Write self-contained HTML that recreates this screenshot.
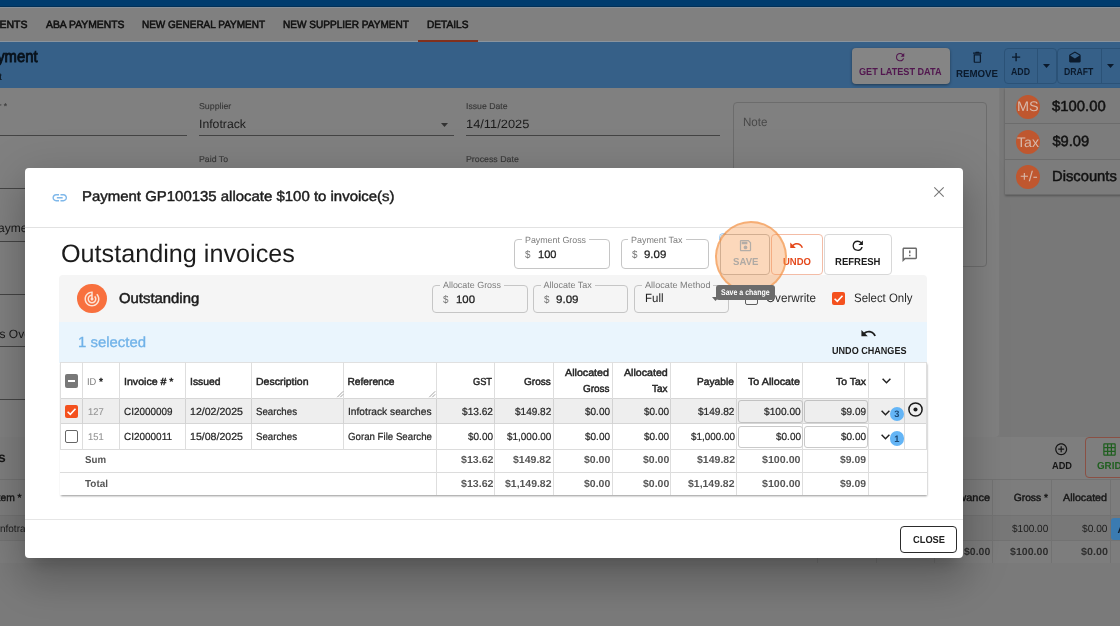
<!DOCTYPE html>
<html>
<head>
<meta charset="utf-8">
<title>Payment allocate</title>
<style>
*{box-sizing:border-box;margin:0;padding:0}
html,body{width:1120px;height:626px;overflow:hidden;background:#7a7a7a;font-family:"Liberation Sans",sans-serif;color:#111}
.a{position:absolute}
.t{position:absolute;white-space:pre;line-height:1;transform-origin:0 50%;text-rendering:geometricPrecision}
#bg,#fg{position:absolute;left:0;top:0;width:1120px;height:626px;overflow:hidden;will-change:transform}
.ul{position:absolute;height:1px;background:#444}
.ob{position:absolute;border:1px solid #c6c6c6;border-radius:4px}
.btn{position:absolute;border:1px solid #d0d0d0;border-radius:4px;background:#fff}
.vl{position:absolute;width:1px;background:#dedede}
.hl{position:absolute;height:1px;background:#dedede}
.cb{position:absolute;width:13.3px;height:13.3px;border-radius:2px}
svg{position:absolute;overflow:visible}
</style>
</head>
<body>
<div id="bg">
<div class="a" style="left:0;top:0;width:1120px;height:7px;background:#003c6e;border-bottom:1px solid #003058"></div><div class="a" style="left:0;top:7px;width:1120px;height:35px;background:#808080;border-top:1px solid #86909a;border-bottom:1px solid #8a949e"></div><span class="t" style="top:20.00px;font-size:10.5px;color:#101010;-webkit-text-stroke:0.55px #101010;left:-9.25px;">MENTS</span><span class="t" style="top:20.00px;font-size:10.5px;color:#101010;transform:scaleX(0.9866);-webkit-text-stroke:0.55px #101010;left:45.75px;">ABA PAYMENTS</span><span class="t" style="top:20.00px;font-size:10.5px;color:#101010;transform:scaleX(0.9511);-webkit-text-stroke:0.55px #101010;left:142.00px;">NEW GENERAL PAYMENT</span><span class="t" style="top:20.00px;font-size:10.5px;color:#101010;transform:scaleX(0.9584);-webkit-text-stroke:0.55px #101010;left:283.00px;">NEW SUPPLIER PAYMENT</span><span class="t" style="top:20.00px;font-size:10.5px;color:#101010;transform:scaleX(0.9655);-webkit-text-stroke:0.55px #101010;left:427.00px;">DETAILS</span><div class="a" style="left:418px;top:40px;width:60px;height:2px;background:#82301c"></div><div class="a" style="left:0;top:42px;width:1120px;height:46px;background:#366088"></div><span class="t" style="top:49.00px;font-size:16.7px;color:#08111a;transform:scaleX(0.8883);-webkit-text-stroke:0.85px #08111a;left:-21.40px;">Payment</span><span class="t" style="top:73.00px;font-size:10px;color:#0a141e;left:-0.78px;">t</span><div class="a" style="left:851.5px;top:47.5px;width:98.5px;height:36.5px;background:#858585;border-radius:4px;box-shadow:0 1px 3px rgba(0,0,0,.4)"></div><span class="t" style="top:68.00px;font-size:10.2px;color:#52174f;font-weight:700;transform:scaleX(0.8943);left:859.20px;">GET LATEST DATA</span><svg style="left:893.6px;top:51.2px" width="12.3" height="12.3" viewBox="0 0 24 24"><path fill="#52174f" d="M17.65 6.35A7.95 7.95 0 0 0 12 4a8 8 0 1 0 7.73 10h-2.08A6 6 0 1 1 12 6c1.66 0 3.14.69 4.22 1.78L13 11h7V4z"/></svg><span class="t" style="top:70.00px;font-size:10.2px;color:#0b1a2c;font-weight:700;transform:scaleX(0.9512);left:955.50px;">REMOVE</span><svg style="left:969.6px;top:49.6px" width="14.7" height="14.7" viewBox="0 0 24 24"><path fill="#0b1a2c" d="M6 19c0 1.1.9 2 2 2h8c1.1 0 2-.9 2-2V7H6zM8 9h8v10H8zm7.5-5l-1-1h-5l-1 1H5v2h14V4z"/></svg><div class="a" style="left:1003.5px;top:48px;width:53px;height:35.5px;border:1px solid #2b5277;border-radius:4px"></div><div class="a" style="left:1037px;top:48px;width:1px;height:35.5px;background:#2b5277"></div><span class="t" style="top:68.00px;font-size:10.2px;color:#0b1a2c;font-weight:700;transform:scaleX(0.8606);left:1011.20px;">ADD</span><svg style="left:1012.4px;top:53px" width="8.2" height="8.2" viewBox="0 0 10 10"><path stroke="#0b1a2c" stroke-width="1.7" fill="none" d="M5 0v10M0 5h10"/></svg><svg style="left:1043px;top:64px" width="7" height="4" viewBox="0 0 7 4"><path fill="#0b1a2c" d="M0 0h7L3.5 4z"/></svg><div class="a" style="left:1057px;top:48px;width:70px;height:35.5px;border:1px solid #2b5277;border-radius:4px"></div><div class="a" style="left:1101px;top:48px;width:1px;height:35.5px;background:#2b5277"></div><span class="t" style="top:68.00px;font-size:10.2px;color:#0b1a2c;font-weight:700;transform:scaleX(0.8514);left:1064.00px;">DRAFT</span><svg style="left:1068.3px;top:51px" width="13.8" height="13.8" viewBox="0 0 24 24"><path fill="#0b1a2c" d="M21.99 8c0-.72-.37-1.35-.94-1.7L12 1 2.95 6.3C2.38 6.65 2 7.28 2 8v10c0 1.1.9 2 2 2h16c1.1 0 2-.9 2-2zM12 13L3.74 7.84 12 3l8.26 4.84z"/></svg><svg style="left:1107.3px;top:64px" width="7" height="4" viewBox="0 0 7 4"><path fill="#0b1a2c" d="M0 0h7L3.5 4z"/></svg><div class="a" style="left:-4px;top:88px;width:1003px;height:349px;background:#808080;border-radius:0 0 4px 4px"></div><span class="t" style="top:102.00px;font-size:8.5px;color:#383838;-webkit-text-stroke:0.15px #383838;left:-1.50px;">r *</span><div class="ul" style="left:0;top:134.5px;width:186.5px"></div><span class="t" style="top:102.00px;font-size:8.5px;color:#383838;transform:scaleX(1.0357);-webkit-text-stroke:0.15px #383838;left:199.00px;">Supplier</span><span class="t" style="top:118.00px;font-size:12px;color:#1a1a1a;transform:scaleX(1.0210);left:199.00px;">Infotrack</span><div class="ul" style="left:199px;top:134.5px;width:254.8px"></div><svg style="left:441px;top:123px" width="7" height="4" viewBox="0 0 7 4"><path fill="#333" d="M0 0h7L3.5 4z"/></svg><span class="t" style="top:102.00px;font-size:8.5px;color:#383838;transform:scaleX(1.0211);-webkit-text-stroke:0.15px #383838;left:465.50px;">Issue Date</span><span class="t" style="top:118.00px;font-size:12px;color:#1a1a1a;transform:scaleX(1.0698);left:465.50px;">14/11/2025</span><div class="ul" style="left:465.5px;top:134.5px;width:254.5px"></div><span class="t" style="top:155.00px;font-size:8.5px;color:#383838;transform:scaleX(1.0283);-webkit-text-stroke:0.15px #383838;left:199.00px;">Paid To</span><span class="t" style="top:155.00px;font-size:8.5px;color:#383838;transform:scaleX(1.0347);-webkit-text-stroke:0.15px #383838;left:465.50px;">Process Date</span><div class="a" style="left:733px;top:101.5px;width:254px;height:165px;border:1px solid #6c6c6c;border-radius:4px"></div><span class="t" style="top:116.00px;font-size:12px;color:#484848;transform:scaleX(0.9661);left:743.00px;">Note</span><div class="ul" style="left:0;top:188px;width:30px"></div><span class="t" style="top:222.00px;font-size:12px;color:#181818;left:0.00px;margin-left:-10px;">Payme</span><div class="ul" style="left:0;top:240.5px;width:30px"></div><div class="ul" style="left:0;top:293.5px;width:30px"></div><span class="t" style="top:328.00px;font-size:12px;color:#181818;left:-0.50px;">s Over</span><div class="ul" style="left:0;top:346px;width:30px"></div><div class="ul" style="left:0;top:399px;width:30px"></div><div class="a" style="left:999.5px;top:88px;width:121px;height:349px;background:#787878"></div><div class="a" style="left:1004.5px;top:88px;width:120px;height:107px;background:#7c7c7c;box-shadow:0 1px 2px rgba(0,0,0,.3)"></div><div class="a" style="left:1004.5px;top:123px;width:120px;height:1px;background:#6c6c6c"></div><div class="a" style="left:1004.5px;top:159px;width:120px;height:1px;background:#6c6c6c"></div><div class="a" style="left:1004.5px;top:194px;width:120px;height:1px;background:#6c6c6c"></div><div class="a" style="left:1016.0999999999999px;top:94.5px;width:24px;height:24px;border-radius:50%;background:#bf572f;overflow:hidden"></div><span class="t" style="top:99.00px;font-size:14px;color:#d8b9ab;transform:scaleX(1.0333);left:1017.40px;">MS</span><div class="a" style="left:1016.0999999999999px;top:129.6px;width:24px;height:24px;border-radius:50%;background:#bf572f;overflow:hidden"></div><span class="t" style="top:135.00px;font-size:14px;color:#d8b9ab;transform:scaleX(1.0093);left:1017.40px;">Tax</span><div class="a" style="left:1016.0999999999999px;top:164.5px;width:24px;height:24px;border-radius:50%;background:#bf572f;overflow:hidden"></div><span class="t" style="top:169.00px;font-size:14px;color:#d8b9ab;transform:scaleX(1.0637);left:1019.80px;">+/-</span><span class="t" style="top:100.00px;font-size:14.7px;color:#121212;transform:scaleX(1.0133);-webkit-text-stroke:0.5px #121212;left:1052.40px;">$100.00</span><span class="t" style="top:135.00px;font-size:14.7px;color:#121212;-webkit-text-stroke:0.5px #121212;left:1052.40px;">$9.09</span><span class="t" style="top:170.00px;font-size:14.7px;color:#121212;transform:scaleX(1.0047);-webkit-text-stroke:0.5px #121212;left:1052.40px;">Discounts</span><div class="a" style="left:-4px;top:437px;width:1130px;height:126px;background:#7e7e7e"></div><span class="t" style="top:450.00px;font-size:14px;color:#161616;font-weight:700;left:-2.00px;">s</span><svg style="left:1054.1px;top:442.3px" width="14.4" height="14.4" viewBox="0 0 24 24"><path fill="#161616" d="M13 7h-2v4H7v2h4v4h2v-4h4v-2h-4zm-1-5C6.48 2 2 6.48 2 12s4.480 10 10 10 10-4.480 10-10S17.520 2 12 2zm0 18c-4.410 0-8-3.590-8-8s3.590-8 8-8 8 3.590 8 8-3.590 8-8 8z"/></svg><span class="t" style="top:462.00px;font-size:10.2px;color:#161616;font-weight:700;transform:scaleX(0.9059);left:1051.70px;">ADD</span><div class="a" style="left:1085px;top:437.3px;width:50px;height:41px;border:1px solid #8a5044;border-radius:4px"></div><svg style="left:1101.75px;top:441.75px" width="15" height="15" viewBox="0 0 24 24"><path fill="#1f5f1f" d="M20 2H4c-1.100 0-2 .900-2 2v16c0 1.100.900 2 2 2h16c1.100 0 2-.900 2-2V4c0-1.100-.900-2-2-2zM8 20H4v-4h4zm0-6H4v-4h4zm0-6H4V4h4zm6 12h-4v-4h4zm0-6h-4v-4h4zm0-6h-4V4h4zm6 12h-4v-4h4zm0-6h-4v-4h4zm0-6h-4V4h4z"/></svg><span class="t" style="top:462.00px;font-size:10.2px;color:#1f5f1f;font-weight:700;transform:scaleX(0.9620);left:1097.30px;">GRID</span><div class="a" style="left:0;top:479px;width:1120px;height:36.5px;background:#7d7d7d;border-top:1px solid #727272;border-bottom:1px solid #727272"></div><div class="a" style="left:0;top:515.5px;width:1120px;height:25px;background:#787878;border-bottom:1px solid #727272"></div><div class="a" style="left:0;top:540.5px;width:1120px;height:22.5px;background:#7d7d7d"></div><div class="a" style="left:817px;top:479px;width:1px;height:84px;background:#727272"></div><div class="a" style="left:875.5px;top:479px;width:1px;height:84px;background:#727272"></div><div class="a" style="left:934px;top:479px;width:1px;height:84px;background:#727272"></div><div class="a" style="left:992px;top:479px;width:1px;height:84px;background:#727272"></div><div class="a" style="left:1050.5px;top:479px;width:1px;height:84px;background:#727272"></div><div class="a" style="left:1109.5px;top:479px;width:1px;height:84px;background:#727272"></div><span class="t" style="top:494.00px;font-size:10.3px;color:#161616;-webkit-text-stroke:0.4px #161616;left:-2.45px;">tem *</span><span class="t" style="top:494.00px;font-size:10.3px;color:#161616;transform:scaleX(1.0652);-webkit-text-stroke:0.4px #161616;left:939.50px;">Allowance</span><span class="t" style="top:494.00px;font-size:10.3px;color:#161616;-webkit-text-stroke:0.4px #161616;left:1013.70px;">Gross *</span><span class="t" style="top:494.00px;font-size:10.3px;color:#161616;transform:scaleX(1.0387);-webkit-text-stroke:0.4px #161616;left:1062.50px;">Allocated</span><span class="t" style="top:525.00px;font-size:10.3px;color:#1c1c1c;transform:scaleX(0.9689);left:0.30px;">nfotrack</span><span class="t" style="top:525.00px;font-size:10.3px;color:#1c1c1c;transform:scaleX(0.9749);left:1012.45px;">$100.00</span><span class="t" style="top:525.00px;font-size:10.3px;color:#1c1c1c;transform:scaleX(0.9891);left:1082.00px;">$0.00</span><div class="a" style="left:1110.5px;top:517.5px;width:20px;height:22.5px;background:#3b7bb1;border-radius:3px"></div><span class="t" style="top:526.00px;font-size:10.3px;color:#0c1c2c;font-weight:700;left:1117.50px;">A</span><span class="t" style="top:548.00px;font-size:10.3px;color:#2e2e2e;font-weight:700;transform:scaleX(1.0201);left:963.70px;">$0.00</span><span class="t" style="top:548.00px;font-size:10.3px;color:#2e2e2e;font-weight:700;transform:scaleX(1.0286);left:1010.45px;">$100.00</span><span class="t" style="top:548.00px;font-size:10.3px;color:#2e2e2e;font-weight:700;transform:scaleX(1.0473);left:1080.50px;">$0.00</span></div>
<div id="fg"><div class="a" style="left:25px;top:168px;width:938px;height:390px;background:#fff;border-radius:4px;box-shadow:0 11px 15px -7px rgba(0,0,0,.2),0 24px 38px 3px rgba(0,0,0,.14),0 9px 46px 8px rgba(0,0,0,.12)"></div><div class="a" style="left:25px;top:227px;width:938px;height:1px;background:#e2e2e2"></div><div class="a" style="left:25px;top:519px;width:938px;height:1px;background:#e6e6e6"></div><svg style="left:51.35px;top:188.65px" width="17.5" height="17.5" viewBox="0 0 24 24"><path fill="#7fb8ea" d="M3.900 12c0-1.710 1.390-3.100 3.100-3.100h4V7H7c-2.760 0-5 2.240-5 5s2.240 5 5 5h4v-1.900H7c-1.710 0-3.100-1.390-3.100-3.100zM8 13h8v-2H8zm9-6h-4v1.900h4c1.710 0 3.100 1.390 3.100 3.100s-1.390 3.100-3.100 3.100h-4V17h4c2.760 0 5-2.240 5-5s-2.240-5-5-5z"/></svg><span class="t" style="top:190.00px;font-size:14.2px;color:#1c1c1c;transform:scaleX(1.0538);-webkit-text-stroke:0.45px #1c1c1c;left:81.50px;">Payment GP100135 allocate $100 to invoice(s)</span><svg style="left:934px;top:187px" width="10" height="10" viewBox="0 0 10 10"><path stroke="#777" stroke-width="1.1" fill="none" d="M0.3 0.3l9.400 9.400M9.700 0.300l-9.400 9.400"/></svg><span class="t" style="top:242.00px;font-size:25.2px;color:#1c1c1c;left:61.00px;">Outstanding invoices</span><div class="ob" style="left:514px;top:239px;width:96px;height:30px"></div><div class="a" style="left:521.5px;top:238px;width:67.0px;height:3px;background:#fff"></div><span class="t" style="top:236.00px;font-size:9px;color:#7c7c7c;transform:scaleX(0.9834);left:524.50px;">Payment Gross</span><span class="t" style="top:250.00px;font-size:10.9px;color:#757575;transform:scaleX(0.9072);left:524.50px;">$</span><span class="t" style="top:250.00px;font-size:10.9px;color:#222;transform:scaleX(1.0181);-webkit-text-stroke:0.25px #222;left:537.50px;">100</span><div class="ob" style="left:621px;top:239px;width:88px;height:30px"></div><div class="a" style="left:628px;top:238px;width:57.5px;height:3px;background:#fff"></div><span class="t" style="top:236.00px;font-size:9px;color:#7c7c7c;transform:scaleX(0.9928);left:631.00px;">Payment Tax</span><span class="t" style="top:250.00px;font-size:10.9px;color:#757575;transform:scaleX(0.9072);left:631.50px;">$</span><span class="t" style="top:250.00px;font-size:10.9px;color:#222;transform:scaleX(1.0517);-webkit-text-stroke:0.25px #222;left:643.80px;">9.09</span><div class="btn" style="left:720px;top:234px;width:50px;height:40.5px;border:1.500px solid #bdbdbd"></div><div class="btn" style="left:770.5px;top:234px;width:52px;height:40.5px;border-color:#f3bca6"></div><div class="btn" style="left:823.5px;top:234px;width:68px;height:40.5px;border-color:#d8d8d8"></div><svg style="left:788.9px;top:237.7px" width="15" height="15" viewBox="0 0 24 24"><path fill="#e4491c" d="M12.500 8c-2.650 0-5.050.990-6.900 2.600L2 7v9h9l-3.620-3.620c1.390-1.160 3.160-1.880 5.120-1.880 3.540 0 6.550 2.310 7.600 5.500l2.370-.780C21.080 11.030 17.150 8 12.500 8z"/></svg><span class="t" style="top:258.00px;font-size:10.2px;color:#e4491c;font-weight:700;transform:scaleX(0.9333);left:783.00px;">UNDO</span><svg style="left:850px;top:237.5px" width="15.5" height="15.5" viewBox="0 0 24 24"><path fill="#1c1c1c" d="M17.650 6.350A7.950 7.950 0 0 0 12 4a8 8 0 1 0 7.730 10h-2.080A6 6 0 1 1 12 6c1.660 0 3.140.690 4.220 1.780L13 11h7V4z"/></svg><span class="t" style="top:258.00px;font-size:10.2px;color:#1c1c1c;font-weight:700;transform:scaleX(0.9345);left:835.00px;">REFRESH</span><svg style="left:901px;top:246.3px" width="17.500" height="17.500" viewBox="0 0 24 24"><path fill="#6a6a6a" d="M20 2H4c-1.100 0-2 .900-2 2v18l4-4h14c1.100 0 2-.900 2-2V4c0-1.100-.900-2-2-2zm0 14H5.170L4 17.170V4h16zm-9-4h2v2h-2zm0-6h2v4h-2z"/></svg><div class="a" style="left:59px;top:275px;width:868px;height:48px;background:#f5f5f5;border-radius:4px 4px 0 0"></div><div class="a" style="left:77px;top:283.700px;width:29.800px;height:29.800px;border-radius:50%;background:#f8703e"></div><svg style="left:83px;top:289.5px" width="18" height="18" viewBox="0 0 24 24"><path fill="#fde3d6" d="M19.070 4.930l-1.410 1.410C19.100 7.790 20 9.790 20 12c0 4.420-3.580 8-8 8s-8-3.580-8-8c0-4.080 3.050-7.440 7-7.930v2.020C8.160 6.570 6 9.030 6 12c0 3.310 2.690 6 6 6s6-2.690 6-6c0-1.660-.670-3.160-1.760-4.240l-1.410 1.410C15.550 9.900 16 10.900 16 12c0 2.210-1.790 4-4 4s-4-1.790-4-4c0-1.860 1.280-3.410 3-3.860v2.140c-.600.350-1 .980-1 1.720 0 1.100.900 2 2 2s2-.900 2-2c0-.740-.400-1.380-1-1.720V2h-1C6.480 2 2 6.480 2 12s4.480 10 10 10 10-4.480 10-10c0-2.760-1.120-5.260-2.930-7.070z"/></svg><span class="t" style="top:292.00px;font-size:14.2px;color:#1c1c1c;transform:scaleX(1.0482);-webkit-text-stroke:0.5px #1c1c1c;left:119.20px;">Outstanding</span><div class="ob" style="left:432px;top:284.5px;width:95.5px;height:28.5px"></div><div class="a" style="left:439.5px;top:283.5px;width:64.0px;height:3px;background:#f5f5f5"></div><span class="t" style="top:281.00px;font-size:9px;color:#7c7c7c;transform:scaleX(0.9909);left:442.50px;">Allocate Gross</span><span class="t" style="top:295.00px;font-size:10.9px;color:#757575;transform:scaleX(0.9072);left:442.50px;">$</span><span class="t" style="top:295.00px;font-size:10.9px;color:#222;transform:scaleX(1.0456);-webkit-text-stroke:0.25px #222;left:455.50px;">100</span><div class="ob" style="left:533px;top:284.5px;width:95px;height:28.5px"></div><div class="a" style="left:540.5px;top:283.5px;width:54.5px;height:3px;background:#f5f5f5"></div><span class="t" style="top:281.00px;font-size:9px;color:#7c7c7c;left:543.50px;">Allocate Tax</span><span class="t" style="top:295.00px;font-size:10.9px;color:#757575;transform:scaleX(0.9072);left:543.50px;">$</span><span class="t" style="top:295.00px;font-size:10.9px;color:#222;transform:scaleX(1.0612);-webkit-text-stroke:0.25px #222;left:556.30px;">9.09</span><div class="ob" style="left:634px;top:284.5px;width:94.5px;height:28.5px"></div><div class="a" style="left:641.5px;top:283.5px;width:71.5px;height:3px;background:#f5f5f5"></div><span class="t" style="top:281.00px;font-size:9px;color:#7c7c7c;transform:scaleX(1.0148);left:644.50px;">Allocate Method</span><span class="t" style="top:292.00px;font-size:12px;color:#222;transform:scaleX(0.9564);left:644.50px;">Full</span><svg style="left:712px;top:297px" width="7" height="4" viewBox="0 0 7 4"><path fill="#666" d="M0 0h7L3.500 4z"/></svg><div class="cb" style="left:744.5px;top:291.5px;border:1.5px solid #5f5f5f"></div><span class="t" style="top:292.00px;font-size:12.3px;color:#2a2a2a;transform:scaleX(0.9501);left:766.30px;">Overwrite</span><div class="cb" style="left:831.5px;top:292px;background:#f4511e"></div><svg style="left:831.5px;top:292px" width="13" height="13" viewBox="0 0 13 13"><path fill="none" stroke="#fff" stroke-width="1.600" d="M2.600 6.700l2.700 2.700 5.200-5.600"/></svg><span class="t" style="top:292.00px;font-size:12.3px;color:#2a2a2a;transform:scaleX(0.9302);left:853.70px;">Select Only</span><div class="a" style="left:59px;top:322px;width:868px;height:40.5px;background:#eaf5fd"></div><span class="t" style="top:336.00px;font-size:14.5px;color:#70b2e8;transform:scaleX(1.0286);-webkit-text-stroke:0.32px #70b2e8;left:78.00px;">1 selected</span><svg style="left:859.6px;top:324.9px" width="17" height="17" viewBox="0 0 24 24"><path fill="#1c1c1c" d="M12.500 8c-2.650 0-5.050.990-6.900 2.600L2 7v9h9l-3.620-3.620c1.390-1.160 3.160-1.880 5.120-1.880 3.540 0 6.550 2.310 7.600 5.500l2.370-.780C21.080 11.030 17.150 8 12.500 8z"/></svg><span class="t" style="top:347.00px;font-size:10.2px;color:#1c1c1c;font-weight:700;transform:scaleX(0.8892);left:831.50px;">UNDO CHANGES</span><div class="a" style="left:60px;top:362px;width:867px;height:133px;background:#fff;box-shadow:0 1.5px 2px -0.5px rgba(0,0,0,.42)"></div><div class="a" style="left:60px;top:399px;width:867px;height:24.500px;background:#eeeeee"></div><div class="hl" style="left:60px;top:362px;width:867px;background:#e0e0e0"></div><div class="hl" style="left:60px;top:398px;width:867px;background:#d6d6d6"></div><div class="hl" style="left:60px;top:423px;width:867px;background:#d6d6d6"></div><div class="hl" style="left:60px;top:449px;width:867px;background:#dcdcdc"></div><div class="hl" style="left:60px;top:471.5px;width:867px;background:#dcdcdc"></div><div class="vl" style="left:60px;top:362px;height:87.5px"></div><div class="vl" style="left:926px;top:362px;height:87.5px"></div><div class="vl" style="left:82px;top:362px;height:87.5px"></div><div class="vl" style="left:119px;top:362px;height:87.5px"></div><div class="vl" style="left:185px;top:362px;height:87.5px"></div><div class="vl" style="left:251px;top:362px;height:87.5px"></div><div class="vl" style="left:343px;top:362px;height:87.5px"></div><div class="vl" style="left:436px;top:362px;height:133px"></div><div class="vl" style="left:494px;top:362px;height:133px"></div><div class="vl" style="left:553px;top:362px;height:133px"></div><div class="vl" style="left:612px;top:362px;height:133px"></div><div class="vl" style="left:670px;top:362px;height:133px"></div><div class="vl" style="left:736px;top:362px;height:133px"></div><div class="vl" style="left:802px;top:362px;height:133px"></div><div class="vl" style="left:868px;top:362px;height:133px"></div><div class="vl" style="left:904px;top:362px;height:87.5px"></div><div class="vl" style="left:82px;top:398.5px;height:25.500px;background:#d2d2d2"></div><div class="vl" style="left:119px;top:398.5px;height:25.500px;background:#d2d2d2"></div><div class="vl" style="left:185px;top:398.5px;height:25.500px;background:#d2d2d2"></div><div class="vl" style="left:251px;top:398.5px;height:25.500px;background:#d2d2d2"></div><div class="vl" style="left:343px;top:398.5px;height:25.500px;background:#d2d2d2"></div><div class="vl" style="left:436px;top:398.5px;height:25.500px;background:#d2d2d2"></div><div class="vl" style="left:494px;top:398.5px;height:25.500px;background:#d2d2d2"></div><div class="vl" style="left:553px;top:398.5px;height:25.500px;background:#d2d2d2"></div><div class="vl" style="left:612px;top:398.5px;height:25.500px;background:#d2d2d2"></div><div class="vl" style="left:670px;top:398.5px;height:25.500px;background:#d2d2d2"></div><div class="vl" style="left:736px;top:398.5px;height:25.500px;background:#d2d2d2"></div><div class="vl" style="left:904px;top:398.5px;height:25.500px;background:#d2d2d2"></div><div class="cb" style="left:65px;top:374.3px;background:#787878"></div><div class="a" style="left:68px;top:380px;width:7px;height:1.600px;background:#fff"></div><span class="t" style="top:378.00px;font-size:10px;color:#7a7a7a;transform:scaleX(0.9300);left:87.00px;">ID</span><span class="t" style="top:378.00px;font-size:10.2px;color:#242424;-webkit-text-stroke:0.45px #242424;left:99.00px;">*</span><span class="t" style="top:378.00px;font-size:10.2px;color:#242424;transform:scaleX(1.0404);-webkit-text-stroke:0.45px #242424;left:123.50px;">Invoice # *</span><span class="t" style="top:378.00px;font-size:10.2px;color:#242424;transform:scaleX(1.0161);-webkit-text-stroke:0.45px #242424;left:189.50px;">Issued</span><span class="t" style="top:378.00px;font-size:10.2px;color:#242424;transform:scaleX(1.0300);-webkit-text-stroke:0.45px #242424;left:255.50px;">Description</span><span class="t" style="top:378.00px;font-size:10.2px;color:#242424;-webkit-text-stroke:0.45px #242424;left:347.50px;">Reference</span><svg style="left:337px;top:391px" width="6.500" height="6.500" viewBox="0 0 6.500 6.500"><path stroke="#8a8a8a" stroke-width="0.800" fill="none" d="M0.300 6.200L6.200 0.300M3.300 6.200L6.200 3.300"/></svg><svg style="left:428.8px;top:391px" width="6.500" height="6.500" viewBox="0 0 6.500 6.500"><path stroke="#8a8a8a" stroke-width="0.800" fill="none" d="M0.300 6.200L6.200 0.300M3.300 6.200L6.200 3.300"/></svg><span class="t" style="top:378.00px;font-size:10.2px;color:#242424;transform:scaleX(0.9068);-webkit-text-stroke:0.45px #242424;left:472.50px;">GST</span><span class="t" style="top:378.00px;font-size:10.2px;color:#242424;transform:scaleX(0.9845);-webkit-text-stroke:0.45px #242424;left:523.75px;">Gross</span><span class="t" style="top:369.00px;font-size:10.2px;color:#242424;transform:scaleX(1.0496);-webkit-text-stroke:0.45px #242424;left:565.00px;">Allocated</span><span class="t" style="top:385.00px;font-size:10.2px;color:#242424;transform:scaleX(0.9753);-webkit-text-stroke:0.45px #242424;left:582.50px;">Gross</span><span class="t" style="top:369.00px;font-size:10.2px;color:#242424;transform:scaleX(1.0436);-webkit-text-stroke:0.45px #242424;left:623.75px;">Allocated</span><span class="t" style="top:385.00px;font-size:10.2px;color:#242424;transform:scaleX(0.9773);-webkit-text-stroke:0.45px #242424;left:652.00px;">Tax</span><span class="t" style="top:378.00px;font-size:10.2px;color:#242424;-webkit-text-stroke:0.45px #242424;left:697.00px;">Payable</span><span class="t" style="top:378.00px;font-size:10.2px;color:#242424;transform:scaleX(1.0552);-webkit-text-stroke:0.45px #242424;left:747.50px;">To Allocate</span><span class="t" style="top:378.00px;font-size:10.2px;color:#242424;transform:scaleX(1.0251);-webkit-text-stroke:0.45px #242424;left:835.50px;">To Tax</span><svg style="left:881.8px;top:378px" width="9" height="6" viewBox="0 0 9 6"><path stroke="#222" stroke-width="1.500" fill="none" d="M0.600 0.800L4.500 4.700L8.400 0.800"/></svg><div class="cb" style="left:65px;top:405px;background:#f4511e"></div><svg style="left:65px;top:405px" width="13" height="13" viewBox="0 0 13 13"><path fill="none" stroke="#fff" stroke-width="1.600" d="M2.600 6.700l2.700 2.700 5.200-5.600"/></svg><span class="t" style="top:408.00px;font-size:9.8px;color:#969696;transform:scaleX(0.9536);-webkit-text-stroke:0.15px #969696;left:87.70px;">127</span><span class="t" style="top:408.00px;font-size:10.3px;color:#262626;transform:scaleX(0.9625);-webkit-text-stroke:0.22px #262626;left:124.00px;">CI2000009</span><span class="t" style="top:408.00px;font-size:10.3px;color:#262626;transform:scaleX(1.0282);-webkit-text-stroke:0.22px #262626;left:190.00px;">12/02/2025</span><span class="t" style="top:408.00px;font-size:10.3px;color:#262626;transform:scaleX(0.9422);-webkit-text-stroke:0.22px #262626;left:256.00px;">Searches</span><span class="t" style="top:408.00px;font-size:10.3px;color:#262626;transform:scaleX(0.9924);-webkit-text-stroke:0.22px #262626;left:348.00px;">Infotrack searches</span><span class="t" style="top:408.00px;font-size:10.3px;color:#262626;transform:scaleX(0.9841);-webkit-text-stroke:0.22px #262626;left:462.00px;">$13.62</span><span class="t" style="top:408.00px;font-size:10.3px;color:#262626;transform:scaleX(0.9736);-webkit-text-stroke:0.22px #262626;left:515.00px;">$149.82</span><span class="t" style="top:408.00px;font-size:10.3px;color:#262626;transform:scaleX(0.9697);-webkit-text-stroke:0.22px #262626;left:585.00px;">$0.00</span><span class="t" style="top:408.00px;font-size:10.3px;color:#262626;transform:scaleX(0.9697);-webkit-text-stroke:0.22px #262626;left:643.75px;">$0.00</span><span class="t" style="top:408.00px;font-size:10.3px;color:#262626;transform:scaleX(0.9803);-webkit-text-stroke:0.22px #262626;left:698.00px;">$149.82</span><div class="a" style="left:738px;top:400px;width:64.500px;height:22.500px;border:1px solid #c2c2c2;border-radius:3px;background:#eeeeee"></div><div class="a" style="left:803.5px;top:400px;width:64.500px;height:22.500px;border:1px solid #c2c2c2;border-radius:3px;background:#eeeeee"></div><span class="t" style="top:408.00px;font-size:10.3px;color:#262626;transform:scaleX(0.9870);-webkit-text-stroke:0.22px #262626;left:763.75px;">$100.00</span><span class="t" style="top:408.00px;font-size:10.3px;color:#262626;transform:scaleX(0.9697);-webkit-text-stroke:0.22px #262626;left:841.25px;">$9.09</span><svg style="left:881.3px;top:409.5px" width="9" height="6" viewBox="0 0 9 6"><path stroke="#222" stroke-width="1.500" fill="none" d="M0.600 0.800L4.500 4.700L8.400 0.800"/></svg><div class="a" style="left:889.7px;top:406.5px;width:14.400px;height:14.400px;border-radius:50%;background:#64b5f6"></div><span class="t" style="top:410.00px;font-size:9.3px;color:#1b4a78;font-weight:700;left:894.20px;">3</span><svg style="left:907.9px;top:401.5px" width="15" height="15" viewBox="0 0 15 15"><circle cx="7.500" cy="7.500" r="6.600" fill="none" stroke="#1c1c1c" stroke-width="1.500"/><circle cx="7.500" cy="7.500" r="2.050" fill="#1c1c1c"/></svg><div class="cb" style="left:65px;top:430px;border:1.500px solid #666;background:#fff"></div><span class="t" style="top:433.00px;font-size:9.8px;color:#969696;transform:scaleX(0.9536);-webkit-text-stroke:0.15px #969696;left:87.70px;">151</span><span class="t" style="top:433.00px;font-size:10.3px;color:#262626;transform:scaleX(0.9673);-webkit-text-stroke:0.22px #262626;left:124.00px;">CI2000011</span><span class="t" style="top:433.00px;font-size:10.3px;color:#262626;transform:scaleX(1.0282);-webkit-text-stroke:0.22px #262626;left:190.00px;">15/08/2025</span><span class="t" style="top:433.00px;font-size:10.3px;color:#262626;transform:scaleX(0.9422);-webkit-text-stroke:0.22px #262626;left:256.00px;">Searches</span><span class="t" style="top:433.00px;font-size:10.3px;color:#262626;transform:scaleX(0.9407);-webkit-text-stroke:0.22px #262626;left:348.00px;">Goran File Searche</span><span class="t" style="top:433.00px;font-size:10.3px;color:#262626;transform:scaleX(0.9697);-webkit-text-stroke:0.22px #262626;left:468.00px;">$0.00</span><span class="t" style="top:433.00px;font-size:10.3px;color:#262626;transform:scaleX(0.9659);-webkit-text-stroke:0.22px #262626;left:507.00px;">$1,000.00</span><span class="t" style="top:433.00px;font-size:10.3px;color:#262626;transform:scaleX(0.9697);-webkit-text-stroke:0.22px #262626;left:585.00px;">$0.00</span><span class="t" style="top:433.00px;font-size:10.3px;color:#262626;transform:scaleX(0.9697);-webkit-text-stroke:0.22px #262626;left:643.75px;">$0.00</span><span class="t" style="top:433.00px;font-size:10.3px;color:#262626;transform:scaleX(0.9604);-webkit-text-stroke:0.22px #262626;left:690.50px;">$1,000.00</span><div class="a" style="left:738px;top:425.500px;width:64.500px;height:22.500px;border:1px solid #cacaca;border-radius:3px;background:#fff"></div><div class="a" style="left:803.5px;top:425.500px;width:64.500px;height:22.500px;border:1px solid #cacaca;border-radius:3px;background:#fff"></div><span class="t" style="top:433.00px;font-size:10.3px;color:#262626;transform:scaleX(0.9697);-webkit-text-stroke:0.22px #262626;left:775.50px;">$0.00</span><span class="t" style="top:433.00px;font-size:10.3px;color:#262626;transform:scaleX(0.9697);-webkit-text-stroke:0.22px #262626;left:841.25px;">$0.00</span><svg style="left:881.3px;top:433.8px" width="9" height="6" viewBox="0 0 9 6"><path stroke="#222" stroke-width="1.500" fill="none" d="M0.600 0.800L4.500 4.700L8.400 0.800"/></svg><div class="a" style="left:889.7px;top:431.200px;width:14.400px;height:14.400px;border-radius:50%;background:#64b5f6"></div><span class="t" style="top:435.00px;font-size:9.3px;color:#1b4a78;font-weight:700;left:894.30px;">1</span><span class="t" style="top:456.00px;font-size:10.2px;color:#555;font-weight:700;transform:scaleX(0.9512);left:85.00px;">Sum</span><span class="t" style="top:480.00px;font-size:10.2px;color:#555;font-weight:700;transform:scaleX(0.9755);left:85.00px;">Total</span><span class="t" style="top:456.00px;font-size:10.2px;color:#555;font-weight:700;transform:scaleX(1.0426);left:460.50px;">$13.62</span><span class="t" style="top:456.00px;font-size:10.2px;color:#555;font-weight:700;transform:scaleX(1.0318);left:513.00px;">$149.82</span><span class="t" style="top:456.00px;font-size:10.2px;color:#555;font-weight:700;transform:scaleX(1.0294);left:583.75px;">$0.00</span><span class="t" style="top:456.00px;font-size:10.2px;color:#555;font-weight:700;transform:scaleX(1.0294);left:642.50px;">$0.00</span><span class="t" style="top:456.00px;font-size:10.2px;color:#555;font-weight:700;transform:scaleX(1.0318);left:696.50px;">$149.82</span><span class="t" style="top:456.00px;font-size:10.2px;color:#555;font-weight:700;transform:scaleX(1.0454);left:762.00px;">$100.00</span><span class="t" style="top:456.00px;font-size:10.2px;color:#555;font-weight:700;transform:scaleX(1.0196);left:840.00px;">$9.09</span><span class="t" style="top:480.00px;font-size:10.2px;color:#555;font-weight:700;transform:scaleX(1.0426);left:460.50px;">$13.62</span><span class="t" style="top:480.00px;font-size:10.2px;color:#555;font-weight:700;transform:scaleX(1.0259);left:504.50px;">$1,149.82</span><span class="t" style="top:480.00px;font-size:10.2px;color:#555;font-weight:700;transform:scaleX(1.0294);left:583.75px;">$0.00</span><span class="t" style="top:480.00px;font-size:10.2px;color:#555;font-weight:700;transform:scaleX(1.0294);left:642.50px;">$0.00</span><span class="t" style="top:480.00px;font-size:10.2px;color:#555;font-weight:700;transform:scaleX(1.0259);left:688.00px;">$1,149.82</span><span class="t" style="top:480.00px;font-size:10.2px;color:#555;font-weight:700;transform:scaleX(1.0454);left:762.00px;">$100.00</span><span class="t" style="top:480.00px;font-size:10.2px;color:#555;font-weight:700;transform:scaleX(1.0196);left:840.00px;">$9.09</span><div class="a" style="left:900px;top:526px;width:56.500px;height:26.500px;border:1px solid #2c2c2c;border-radius:4px;background:#fff"></div><span class="t" style="top:536.00px;font-size:10.2px;color:#222;font-weight:700;transform:scaleX(0.9114);left:912.50px;">CLOSE</span><div class="a" style="left:719.3px;top:233.300px;width:7px;height:7px;border-top:1.500px solid #a6cff4;border-left:1.500px solid #a6cff4;border-top-left-radius:4.500px"></div><div class="a" style="left:715px;top:221px;width:72px;height:72px;border-radius:50%;background:rgba(247,150,70,.37);border:2.800px solid rgba(240,140,60,.55)"></div><svg style="left:738px;top:237.5px" width="15" height="15" viewBox="0 0 24 24"><path fill="#b3ada7" d="M17 3H5c-1.110 0-2 .900-2 2v14c0 1.100.890 2 2 2h14c1.100 0 2-.900 2-2V7zm2 16H5V5h11.170L19 7.830zm-7-7c-1.660 0-3 1.340-3 3s1.340 3 3 3 3-1.340 3-3-1.340-3-3-3zM6 6h9v4H6z"/></svg><span class="t" style="top:258.00px;font-size:10.2px;color:#b0aaa4;font-weight:700;transform:scaleX(0.9444);left:732.50px;">SAVE</span><div class="a" style="left:715.5px;top:285px;width:59.500px;height:14.500px;border-radius:3px;background:#6b6b6b"></div><span class="t" style="top:288.00px;font-size:8.3px;color:#fff;font-weight:700;transform:scaleX(0.8447);left:721.00px;">Save a change</span></div>
</body>
</html>
